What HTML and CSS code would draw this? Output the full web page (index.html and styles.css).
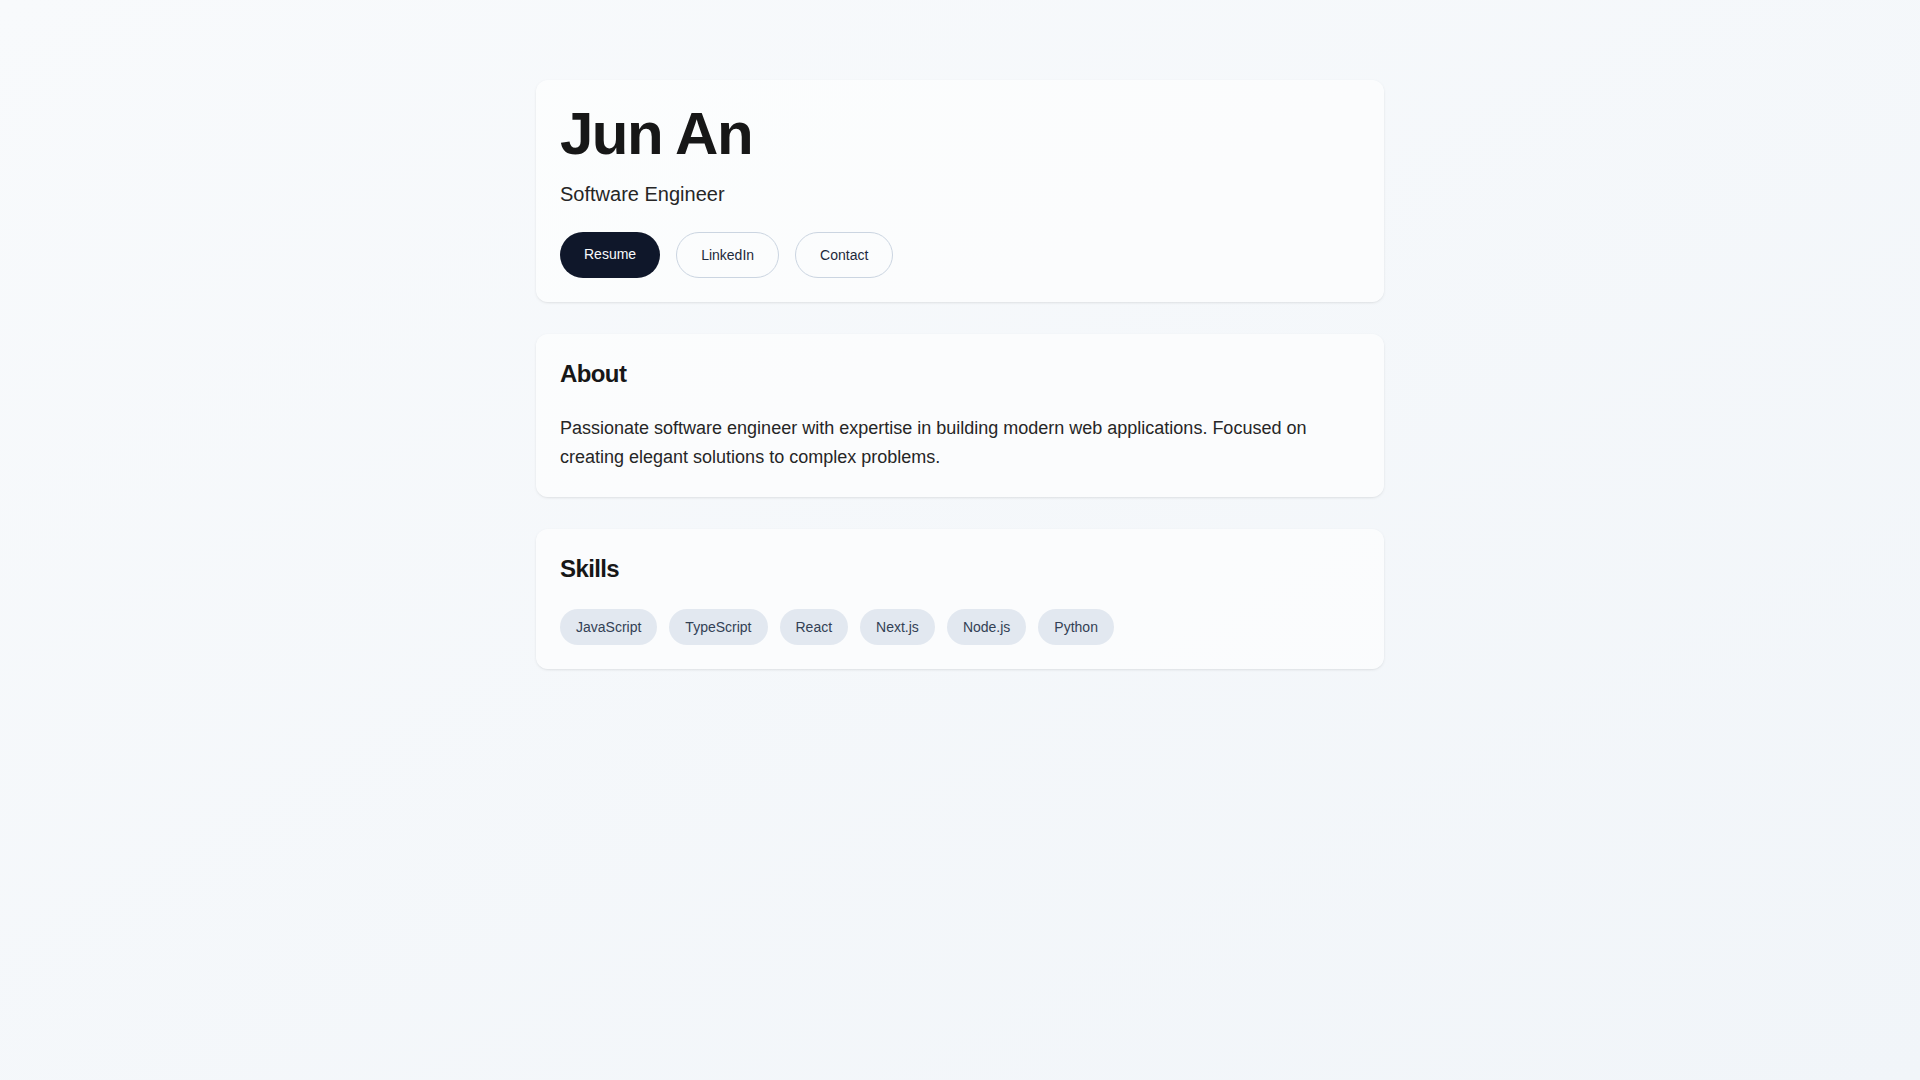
FILE: index.html
```html
<!DOCTYPE html>
<html lang="en">
<head>
    <meta charset="UTF-8">
    <meta name="viewport" content="width=device-width, initial-scale=1.0">
    <title>Jun An - Software Engineer</title>
    <link rel="stylesheet" href="styles.css">
</head>
<body>
    <main class="container">
        <section class="card">
            <h1 class="name">Jun An</h1>
            <p class="role">Software Engineer</p>
            <div class="links">
                <a href="#" class="btn btn-primary">Resume</a>
                <a href="#" class="btn btn-outline">LinkedIn</a>
                <a href="#" class="btn btn-outline">Contact</a>
            </div>
        </section>

        <section class="card">
            <h2 class="section-title">About</h2>
            <p class="about-text">Passionate software engineer with expertise in building modern web applications. Focused on creating elegant solutions to complex problems.</p>
        </section>

        <section class="card">
            <h2 class="section-title">Skills</h2>
            <div class="skills">
                <span class="tag">JavaScript</span>
                <span class="tag">TypeScript</span>
                <span class="tag">React</span>
                <span class="tag">Next.js</span>
                <span class="tag">Node.js</span>
                <span class="tag">Python</span>
            </div>
        </section>
    </main>
</body>
</html>
```

FILE: styles.css
```css
* {
    box-sizing: border-box;
}
html, body {
    height: 100%;
}
body {
    margin: 0;
    font-family: "Liberation Sans", Arial, sans-serif;
    color: #171717;
    background: linear-gradient(to bottom right, #f8fafc, #f1f5f9);
    min-height: 100vh;
}
.container {
    max-width: 896px;
    margin: 0 auto;
    padding: 80px 24px;
    display: flex;
    flex-direction: column;
    gap: 32px;
}
.card {
    background: rgba(255, 255, 255, 0.6);
    border-radius: 12px;
    padding: 24px;
    box-shadow: 0 1px 3px rgba(0, 0, 0, 0.08), 0 1px 2px -1px rgba(0, 0, 0, 0.08);
}
.name {
    margin: 0 0 16px;
    font-size: 60px;
    line-height: 1;
    font-weight: 700;
    letter-spacing: -0.025em;
    color: #171717;
}
.role {
    margin: 0;
    font-size: 20px;
    line-height: 28px;
    color: #262626;
}
.links {
    display: flex;
    align-items: center;
    gap: 16px;
    margin-top: 24px;
}
.btn {
    display: inline-block;
    padding: 12px 24px;
    font-size: 14px;
    line-height: 20px;
    border-radius: 9999px;
    text-decoration: none;
    border: 1px solid #cbd5e1;
}
.btn-primary {
    padding: 12px 24px 14px;
    border: none;
    background: #0f172a;
    color: #f8fafc;
}
.btn-outline {
    background: transparent;
    color: #1e293b;
}
.section-title {
    margin: 0 0 24px;
    font-size: 24px;
    line-height: 32px;
    font-weight: 700;
    letter-spacing: -0.025em;
    color: #171717;
}
.about-text {
    margin: 0;
    font-size: 18px;
    line-height: 1.625;
    color: #262626;
}
.skills {
    display: flex;
    flex-wrap: wrap;
    gap: 12px;
}
.tag {
    padding: 8px 16px;
    font-size: 14px;
    line-height: 20px;
    border-radius: 9999px;
    background: #e2e8f0;
    color: #334155;
}
```
